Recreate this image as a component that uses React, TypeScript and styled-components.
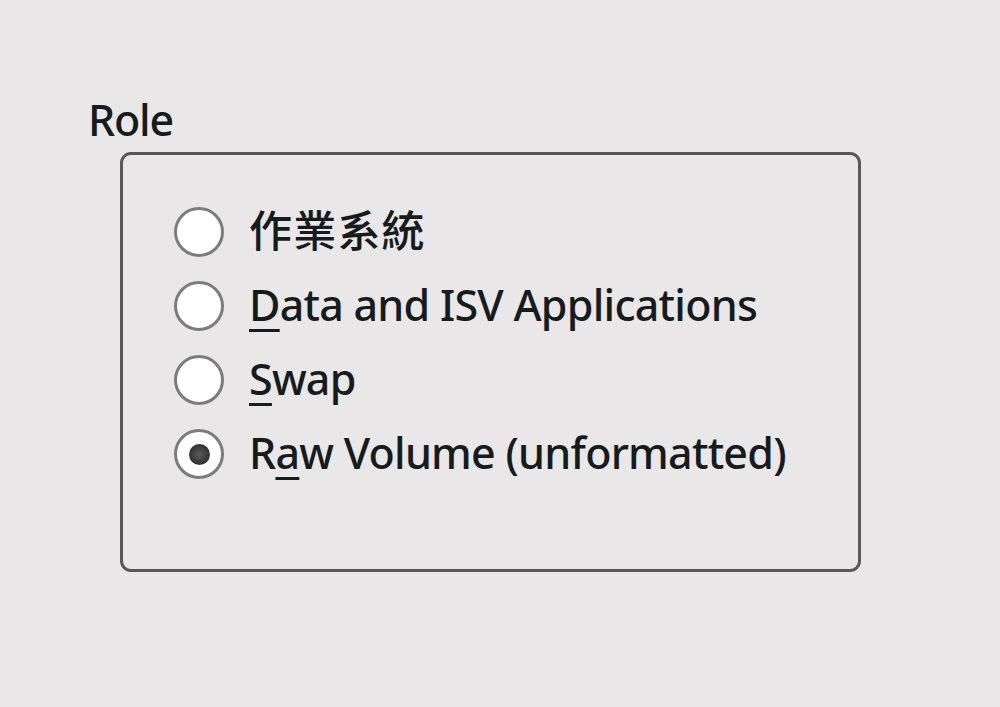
import React from "react";
import styled, { createGlobalStyle } from "styled-components";

const GlobalStyle = createGlobalStyle`
  html, body {
    margin: 0;
    padding: 0;
    background: #e9e7e7;
  }
  body {
    font-family: "Noto Sans", "Open Sans", "Noto Sans CJK TC", sans-serif;
    color: #161b1c;
  }
`;

const Page = styled.div`
  width: 1000px;
  height: 707px;
  box-sizing: border-box;
  padding-top: 92px;
  overflow: hidden;
`;

const GroupTitle = styled.div`
  margin-left: 88px;
  font-size: 43px;
  font-weight: 500;
  letter-spacing: -1.2px;
  line-height: 56px;
  height: 60px;
`;

const GroupBox = styled.div`
  margin-left: 120px;
  width: 741px;
  height: 420px;
  box-sizing: border-box;
  border: 3px solid #585858;
  border-radius: 11px;
  padding: 40px 0 0 51px;
  display: flex;
  flex-direction: column;
`;

const Row = styled.label`
  display: flex;
  align-items: center;
  gap: 25px;
  height: 74px;
  font-size: 43px;
  font-weight: 500;
  cursor: default;
`;

const RadioCircle = styled.span<{ $checked?: boolean }>`
  width: 50px;
  height: 50px;
  box-sizing: border-box;
  border-radius: 50%;
  border: 3px solid #7c7c7c;
  background: #ffffff;
  display: flex;
  align-items: center;
  justify-content: center;
  flex: none;

  &::after {
    content: "";
    display: ${(p) => (p.$checked ? "block" : "none")};
    width: 21px;
    height: 21px;
    border-radius: 50%;
    background: radial-gradient(circle, #5a5a5a 0%, #3a3a3a 55%, #1e1e1e 100%);
  }
`;

const Text = styled.span<{ $cjk?: boolean }>`
  white-space: nowrap;
  line-height: 1;
  letter-spacing: ${(p) => (p.$cjk ? "1.2px" : "-0.75px")};
  padding-bottom: 4px;
`;

const Mnemonic = styled.span`
  text-decoration: underline;
  text-decoration-thickness: 3px;
  text-underline-offset: 8px;
`;

type Option = {
  key: string;
  before: string;
  mn?: string;
  after?: string;
  checked?: boolean;
  cjk?: boolean;
};

const options: Option[] = [
  { key: "os", before: "作業系統", cjk: true },
  { key: "data", before: "", mn: "D", after: "ata and ISV Applications" },
  { key: "swap", before: "", mn: "S", after: "wap" },
  { key: "raw", before: "R", mn: "a", after: "w Volume (unformatted)", checked: true },
];

export default function App() {
  return (
    <>
      <GlobalStyle />
      <Page>
        <GroupTitle>Role</GroupTitle>
        <GroupBox>
          {options.map((o) => (
            <Row key={o.key}>
              <RadioCircle $checked={o.checked} />
              <Text $cjk={o.cjk}>
                {o.before}
                {o.mn && <Mnemonic>{o.mn}</Mnemonic>}
                {o.after}
              </Text>
            </Row>
          ))}
        </GroupBox>
      </Page>
    </>
  );
}
